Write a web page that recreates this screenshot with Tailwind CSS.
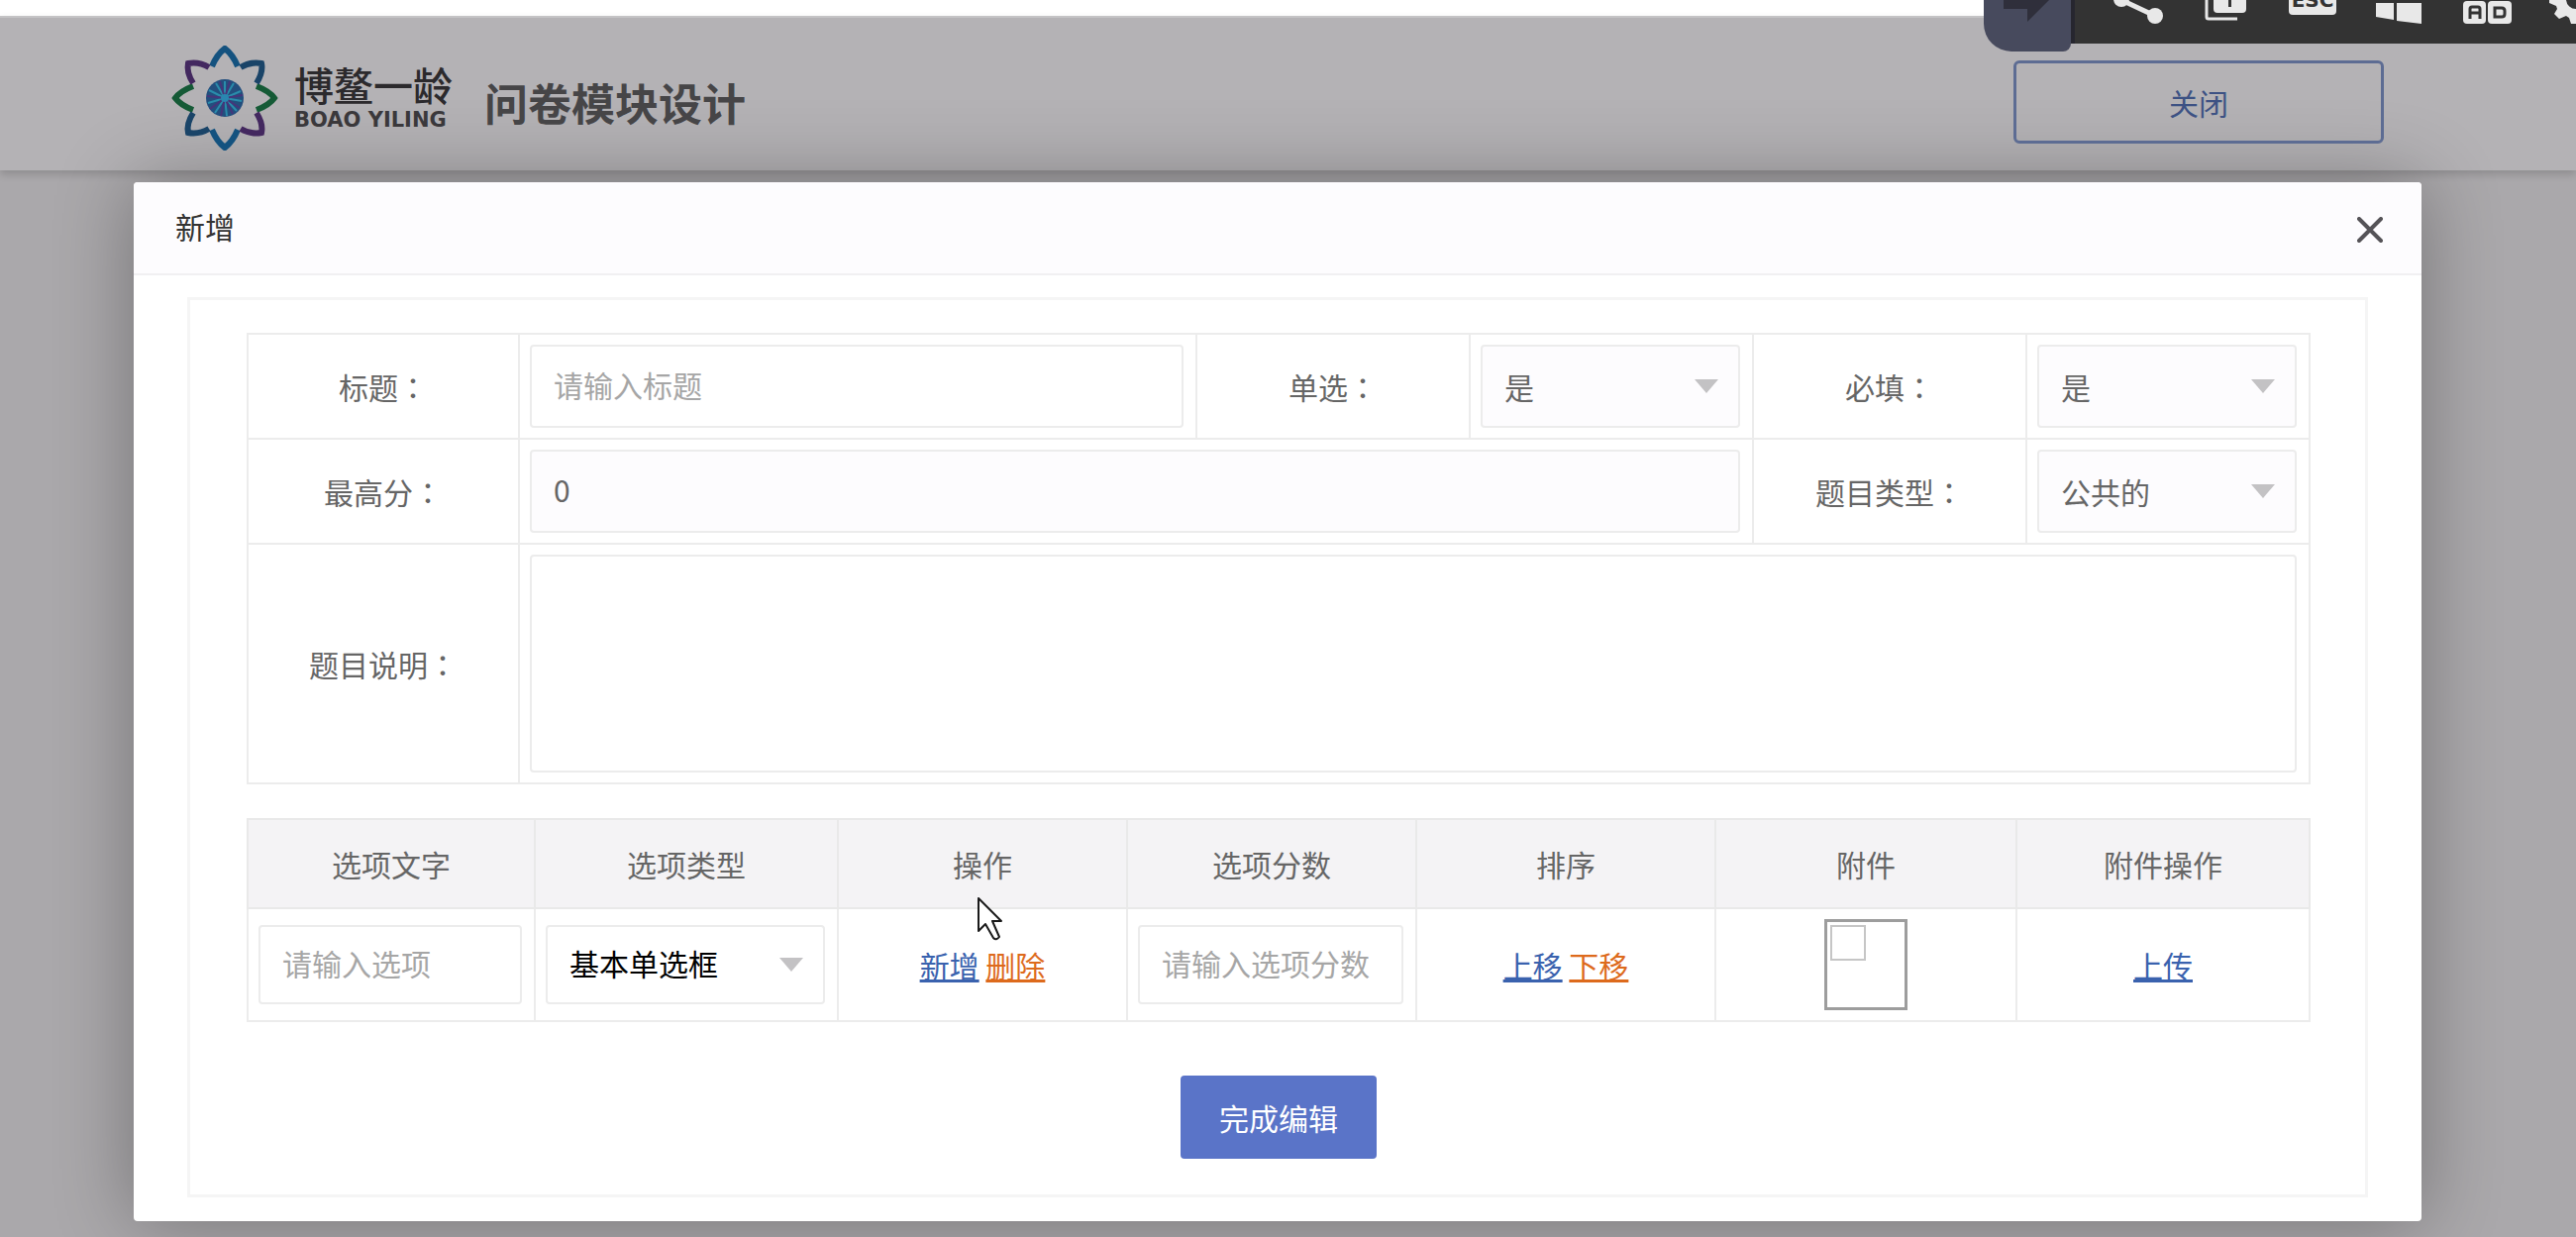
<!DOCTYPE html>
<html lang="zh-CN">
<head>
<meta charset="utf-8">
<meta name="viewport" content="width=device-width, initial-scale=1">
<title>问卷模块设计</title>
<script src="https://cdn.jsdelivr.net/npm/@tailwindcss/browser@4"></script>
</head>
<body class="min-h-screen overflow-x-hidden bg-[#aaa8ab] font-['Noto_Sans_CJK_SC',sans-serif] text-[30px] leading-10 text-[#666]">

<div class="h-4 bg-white"></div>

<header class="flex h-[156px] items-center border-t-2 border-[#c4c3c5] bg-[#b4b2b5] pt-2 pl-[173px] pr-[194px] shadow-[0_4px_8px_rgba(0,0,0,0.16)]">
  <svg class="h-[106px] w-[108px] shrink-0" viewBox="0 0 108 106" fill="none" stroke-width="6" aria-hidden="true">
    <g stroke="#14527f">
      <path d="M41 21Q46 9 54 3Q62 9 67 21"/>
      <path d="M41 85Q46 97 54 103Q62 97 67 85"/>
    </g>
    <g stroke="#155a36">
      <path d="M22 41Q9 46 4 53Q9 60 22 65"/>
      <path d="M86 41Q99 46 104 53Q99 60 86 65"/>
    </g>
    <path stroke="#43285f" d="M38 22Q28 16 17 18Q15 27 22 38"/>
    <path stroke="#1a4468" d="M70 22Q80 16 91 18Q93 27 86 38"/>
    <path stroke="#1a4468" d="M38 84Q28 90 17 88Q15 79 22 68"/>
    <path stroke="#43285f" d="M70 84Q80 90 91 88Q93 79 86 68"/>
    <circle cx="54" cy="53" r="19" fill="#234f7e"/>
    <g stroke-width="2">
      <path stroke="#2a8cab" d="M54 53V36M54 53L63 38M54 53L70 46M54 53L71 56M54 53L66 66M54 53L56 71M54 53L44 68M54 53L37 58M54 53L38 45M54 53L45 38"/>
      <path stroke="#46357a" d="M49 36L54 53L59 36M72 50L54 53L69 63M62 69L54 53L50 71M39 64L54 53L36 51"/>
    </g>
    <circle cx="54" cy="53" r="4" fill="#2a86b0"/>
  </svg>
  <div class="ml-4 flex w-[160px] shrink-0 flex-col gap-1 text-[#2c2a2d]">
    <span class="text-[40px] leading-10 font-medium">博鳌一龄</span>
    <span class="font-['DejaVu_Sans',sans-serif] text-[21px] leading-6 font-bold whitespace-nowrap text-[#3a383b]">BOAO YILING</span>
  </div>
  <h1 class="mt-2 ml-8 text-[44px] leading-[60px] font-bold whitespace-nowrap text-[#464547]">问卷模块设计</h1>
  <button type="button" class="mt-2 ml-auto h-[84px] w-[374px] rounded-md border-3 border-[#5d6c93] text-[#3d5284]">关闭</button>
</header>

<main class="mt-3 mr-[156px] mb-4 ml-[135px] rounded-sm bg-white shadow-[0_0_80px_rgba(0,0,0,0.32)]" role="dialog" aria-labelledby="dialog-title">
  <div class="flex h-[94px] items-center justify-between rounded-t-sm border-b-2 border-[#f1f0f2] bg-[#fdfcfe] pr-[39px] pl-[42px]">
    <h2 id="dialog-title" class="pb-1 text-[#333]">新增</h2>
    <button type="button" aria-label="关闭弹窗" class="pt-1">
      <svg class="size-[26px]" viewBox="0 0 26 26" stroke="#555357" stroke-width="4" stroke-linecap="round"><path d="M2 2L24 24M24 2L2 24"/></svg>
    </button>
  </div>

  <div class="px-[54px] pt-[22px] pb-6">
    <form class="border-3 border-[#f5f5f5] pt-[33px] pr-[55px] pb-9 pl-[57px]">
      <table class="w-full table-fixed border-collapse">
        <colgroup>
          <col class="w-[274px]"><col><col class="w-[276px]"><col class="w-[286px]"><col class="w-[276px]"><col class="w-[286px]">
        </colgroup>
        <tbody>
          <tr class="h-[106px]">
            <th class="border-2 border-[#ececec] font-normal"><label for="title">标题<span lang="zh-TW" class="font-['Noto_Sans_CJK_TC',sans-serif]">：</span></label></th>
            <td class="border-2 border-[#ececec] py-0 pr-3 pl-[10px]"><input id="title" type="text" placeholder="请输入标题" class="block h-[84px] w-full rounded-sm border-2 border-[#ececec] bg-white px-[22px] pb-1 placeholder:text-[#a6a6a6]"></td>
            <th class="border-2 border-[#ececec] font-normal"><label for="single">单选<span lang="zh-TW" class="font-['Noto_Sans_CJK_TC',sans-serif]">：</span></label></th>
            <td class="border-2 border-[#ececec] py-0 pr-3 pl-[10px]">
              <div class="relative">
                <select id="single" class="block h-[84px] w-full appearance-none rounded-sm border-2 border-[#ececec] bg-[#fdfcfe] px-[22px]"><option>是</option><option>否</option></select>
                <svg class="pointer-events-none absolute top-[35px] right-[22px] h-[14px] w-6" viewBox="0 0 24 14" fill="#c3c2c4"><path d="M0 0H24L12 14Z"/></svg>
              </div>
            </td>
            <th class="border-2 border-[#ececec] font-normal"><label for="required">必填<span lang="zh-TW" class="font-['Noto_Sans_CJK_TC',sans-serif]">：</span></label></th>
            <td class="border-2 border-[#ececec] py-0 pr-3 pl-[10px]">
              <div class="relative">
                <select id="required" class="block h-[84px] w-full appearance-none rounded-sm border-2 border-[#ececec] bg-[#fdfcfe] px-[22px]"><option>是</option><option>否</option></select>
                <svg class="pointer-events-none absolute top-[35px] right-[22px] h-[14px] w-6" viewBox="0 0 24 14" fill="#c3c2c4"><path d="M0 0H24L12 14Z"/></svg>
              </div>
            </td>
          </tr>
          <tr class="h-[106px]">
            <th class="border-2 border-[#ececec] font-normal"><label for="score">最高分<span lang="zh-TW" class="font-['Noto_Sans_CJK_TC',sans-serif]">：</span></label></th>
            <td colspan="3" class="border-2 border-[#ececec] py-0 pr-3 pl-[10px]"><input id="score" type="text" value="0" class="block h-[84px] w-full rounded-sm border-2 border-[#ececec] bg-[#fdfcfe] px-[22px] pb-1"></td>
            <th class="border-2 border-[#ececec] font-normal"><label for="kind">题目类型<span lang="zh-TW" class="font-['Noto_Sans_CJK_TC',sans-serif]">：</span></label></th>
            <td class="border-2 border-[#ececec] py-0 pr-3 pl-[10px]">
              <div class="relative">
                <select id="kind" class="block h-[84px] w-full appearance-none rounded-sm border-2 border-[#ececec] bg-[#fdfcfe] px-[22px]"><option>公共的</option></select>
                <svg class="pointer-events-none absolute top-[35px] right-[22px] h-[14px] w-6" viewBox="0 0 24 14" fill="#c3c2c4"><path d="M0 0H24L12 14Z"/></svg>
              </div>
            </td>
          </tr>
          <tr class="h-[242px]">
            <th class="border-2 border-[#ececec] font-normal"><label for="note">题目说明<span lang="zh-TW" class="font-['Noto_Sans_CJK_TC',sans-serif]">：</span></label></th>
            <td colspan="5" class="border-2 border-[#ececec] py-0 pr-3 pl-[10px]"><textarea id="note" class="block h-[220px] w-full resize-none rounded-sm border-2 border-[#ececec] bg-white px-[22px] py-3"></textarea></td>
          </tr>
        </tbody>
      </table>

      <table class="mt-[34px] w-full table-fixed border-collapse text-center">
        <colgroup>
          <col class="w-[290px]"><col class="w-[306px]"><col class="w-[292px]"><col class="w-[292px]"><col class="w-[302px]"><col class="w-[304px]"><col>
        </colgroup>
        <thead class="bg-[#f4f3f5]">
          <tr class="h-[90px]">
            <th class="border-2 border-[#e9e9e9] font-normal">选项文字</th>
            <th class="border-2 border-[#e9e9e9] font-normal">选项类型</th>
            <th class="border-2 border-[#e9e9e9] font-normal">操作</th>
            <th class="border-2 border-[#e9e9e9] font-normal">选项分数</th>
            <th class="border-2 border-[#e9e9e9] font-normal">排序</th>
            <th class="border-2 border-[#e9e9e9] font-normal">附件</th>
            <th class="border-2 border-[#e9e9e9] font-normal">附件操作</th>
          </tr>
        </thead>
        <tbody>
          <tr class="h-[114px]">
            <td class="border-2 border-[#ececec] py-0 pr-3 pl-[10px]"><input type="text" aria-label="选项文字" placeholder="请输入选项" class="block h-20 w-full rounded-sm border-2 border-[#ececec] bg-white px-[22px] pb-1 placeholder:text-[#a6a6a6]"></td>
            <td class="border-2 border-[#ececec] py-0 pr-3 pl-[10px]">
              <div class="relative">
                <select aria-label="选项类型" class="block h-20 w-full appearance-none rounded-sm border-2 border-[#ececec] bg-white px-[22px] pb-1 text-black"><option>基本单选框</option></select>
                <svg class="pointer-events-none absolute top-[33px] right-[22px] h-[14px] w-6" viewBox="0 0 24 14" fill="#c3c2c4"><path d="M0 0H24L12 14Z"/></svg>
              </div>
            </td>
            <td class="relative border-2 border-[#ececec] p-0">
              <a href="#" class="text-[#3a62ae] underline">新增</a>
              <a href="#" class="text-[#dd6a1c] underline">删除</a>
              <svg class="pointer-events-none absolute -top-3 left-[140px] h-[44px] w-[26px]" viewBox="0 0 26 44" fill="#fff" stroke="#1a1a1a" stroke-width="2" stroke-linejoin="round" aria-hidden="true"><path d="M1 1V34L8 27L16 41Q19 44 22 40L15 24H24Z"/></svg>
            </td>
            <td class="border-2 border-[#ececec] py-0 pr-3 pl-[10px]"><input type="text" aria-label="选项分数" placeholder="请输入选项分数" class="block h-20 w-full rounded-sm border-2 border-[#ececec] bg-white px-[22px] pb-1 placeholder:text-[#a6a6a6]"></td>
            <td class="border-2 border-[#ececec] p-0">
              <a href="#" class="text-[#3a62ae] underline">上移</a>
              <a href="#" class="text-[#dd6a1c] underline">下移</a>
            </td>
            <td class="border-2 border-[#ececec] p-0">
              <div class="mx-auto h-[92px] w-[84px] border-3 border-[#9d9d9d] p-[3px]" role="img" aria-label="附件预览">
                <div class="size-9 border-2 border-[#c6c6c6]"></div>
              </div>
            </td>
            <td class="border-2 border-[#ececec] p-0"><a href="#" class="text-[#3a62ae] underline">上传</a></td>
          </tr>
        </tbody>
      </table>

      <div class="mt-[54px] flex justify-center">
        <button type="button" class="h-[84px] w-[198px] rounded-sm bg-[#5a74c8] text-white">完成编辑</button>
      </div>
    </form>
  </div>
</main>

<div class="absolute top-0 right-0 flex items-start" role="toolbar" aria-label="远程控制">
  <button type="button" aria-label="展开" class="h-[52px] w-[88px] rounded-br-lg rounded-bl-[28px] bg-[#474a5d]">
    <svg class="h-[52px] w-[88px]" viewBox="0 0 88 52" fill="#2f2f3b"><path d="M20 0H66L44 22V9H20Z"/></svg>
  </button>
  <svg class="h-11 w-[510px] bg-[#333]" viewBox="0 0 510 44" fill="#e8e8e8" aria-hidden="true">
    <path fill="#26262f" d="M0 0H4V44H0Z"/>
    <circle cx="51" cy="-1" r="8"/><circle cx="85" cy="16" r="8"/><path stroke="#e8e8e8" stroke-width="5" d="M51 0L85 16"/>
    <path fill="none" stroke="#e8e8e8" stroke-width="3" d="M137 -4V17Q137 19 139 19H168"/>
    <rect x="144" y="-12" width="33" height="25" rx="4"/><path fill="#333" d="M159 -4H162V7H159Z"/>
    <rect x="220" y="-12" width="48" height="27" rx="4"/>
    <text x="244" y="7" text-anchor="middle" font-family="DejaVu Sans, sans-serif" font-weight="700" font-size="20" fill="#333">ESC</text>
    <path d="M308 3H326V20L308 17ZM329 3H354V24L329 21Z"/>
    <rect x="396" y="1" width="23" height="23" rx="4"/><rect x="421" y="1" width="24" height="23" rx="4"/>
    <g fill="none" stroke="#333" stroke-width="3"><path d="M403 19V9Q403 7 405 7H411Q413 7 413 9V19M403 13H413"/><path d="M428 8H435Q438 8 438 11V14Q438 17 435 17H428Z"/></g>
    <path fill-rule="evenodd" d="M483 0L483 3L490 6L491 9L488 14L493 19L500 16L503 18L505 24H510V9A10 10 0 0 1 500 0Z"/>
  </svg>
</div>
</body>
</html>
